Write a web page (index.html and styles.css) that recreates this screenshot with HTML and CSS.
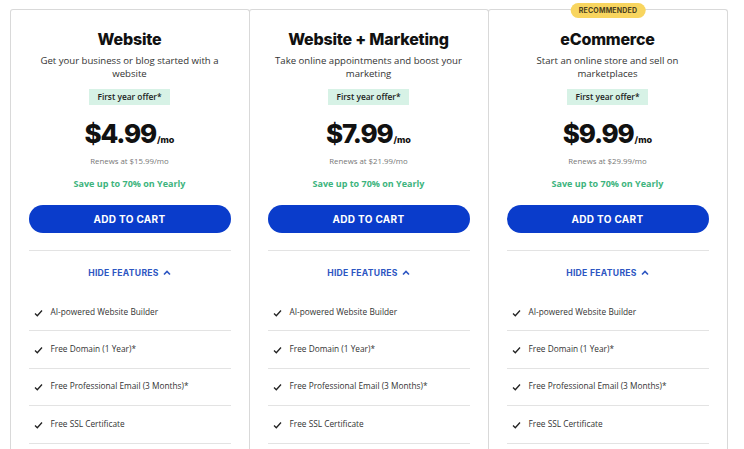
FILE: index.html
```html
<!DOCTYPE html>
<html>
	<head>
		<meta charset="UTF-8">
		<title>Plans</title>
		<link rel="stylesheet" href="styles.css">
	</head>
	<body>
		<div class="plans">
			<div class="card">
				<h2 class="title">Website</h2>
				<p class="desc">Get your business or blog started with a website</p>
				<span class="offer">First year offer*</span>
				<div class="price">$4.99<span class="per">/mo</span></div>
				<p class="renew">Renews at $15.99/mo</p>
				<p class="save">Save up to 70% on Yearly</p>
				<button class="cart">ADD TO CART</button>
				<div class="toggle">HIDE FEATURES <svg width="8" height="6" viewBox="0 0 8 6"><path d="M1 4.5 L4 1.5 L7 4.5" fill="none" stroke="currentColor" stroke-width="1.6"/></svg></div>
				<ul class="features">
					<li><svg class="check" width="9" height="8" viewBox="0 0 9 8"><path d="M1 4.5 L3.3 6.8 L8 1.5" fill="none" stroke="#222" stroke-width="1.3"/></svg>AI-powered Website Builder</li>
					<li><svg class="check" width="9" height="8" viewBox="0 0 9 8"><path d="M1 4.5 L3.3 6.8 L8 1.5" fill="none" stroke="#222" stroke-width="1.3"/></svg>Free Domain (1 Year)*</li>
					<li><svg class="check" width="9" height="8" viewBox="0 0 9 8"><path d="M1 4.5 L3.3 6.8 L8 1.5" fill="none" stroke="#222" stroke-width="1.3"/></svg>Free Professional Email (3 Months)*</li>
					<li><svg class="check" width="9" height="8" viewBox="0 0 9 8"><path d="M1 4.5 L3.3 6.8 L8 1.5" fill="none" stroke="#222" stroke-width="1.3"/></svg>Free SSL Certificate</li>
				</ul>
			</div>

			<div class="card">
				<h2 class="title">Website + Marketing</h2>
				<p class="desc">Take online appointments and boost your marketing</p>
				<span class="offer">First year offer*</span>
				<div class="price">$7.99<span class="per">/mo</span></div>
				<p class="renew">Renews at $21.99/mo</p>
				<p class="save">Save up to 70% on Yearly</p>
				<button class="cart">ADD TO CART</button>
				<div class="toggle">HIDE FEATURES <svg width="8" height="6" viewBox="0 0 8 6"><path d="M1 4.5 L4 1.5 L7 4.5" fill="none" stroke="currentColor" stroke-width="1.6"/></svg></div>
				<ul class="features">
					<li><svg class="check" width="9" height="8" viewBox="0 0 9 8"><path d="M1 4.5 L3.3 6.8 L8 1.5" fill="none" stroke="#222" stroke-width="1.3"/></svg>AI-powered Website Builder</li>
					<li><svg class="check" width="9" height="8" viewBox="0 0 9 8"><path d="M1 4.5 L3.3 6.8 L8 1.5" fill="none" stroke="#222" stroke-width="1.3"/></svg>Free Domain (1 Year)*</li>
					<li><svg class="check" width="9" height="8" viewBox="0 0 9 8"><path d="M1 4.5 L3.3 6.8 L8 1.5" fill="none" stroke="#222" stroke-width="1.3"/></svg>Free Professional Email (3 Months)*</li>
					<li><svg class="check" width="9" height="8" viewBox="0 0 9 8"><path d="M1 4.5 L3.3 6.8 L8 1.5" fill="none" stroke="#222" stroke-width="1.3"/></svg>Free SSL Certificate</li>
				</ul>
			</div>

			<div class="card">
				<span class="recommended">RECOMMENDED</span>
				<h2 class="title">eCommerce</h2>
				<p class="desc">Start an online store and sell on marketplaces</p>
				<span class="offer">First year offer*</span>
				<div class="price">$9.99<span class="per">/mo</span></div>
				<p class="renew">Renews at $29.99/mo</p>
				<p class="save">Save up to 70% on Yearly</p>
				<button class="cart">ADD TO CART</button>
				<div class="toggle">HIDE FEATURES <svg width="8" height="6" viewBox="0 0 8 6"><path d="M1 4.5 L4 1.5 L7 4.5" fill="none" stroke="currentColor" stroke-width="1.6"/></svg></div>
				<ul class="features">
					<li><svg class="check" width="9" height="8" viewBox="0 0 9 8"><path d="M1 4.5 L3.3 6.8 L8 1.5" fill="none" stroke="#222" stroke-width="1.3"/></svg>AI-powered Website Builder</li>
					<li><svg class="check" width="9" height="8" viewBox="0 0 9 8"><path d="M1 4.5 L3.3 6.8 L8 1.5" fill="none" stroke="#222" stroke-width="1.3"/></svg>Free Domain (1 Year)*</li>
					<li><svg class="check" width="9" height="8" viewBox="0 0 9 8"><path d="M1 4.5 L3.3 6.8 L8 1.5" fill="none" stroke="#222" stroke-width="1.3"/></svg>Free Professional Email (3 Months)*</li>
					<li><svg class="check" width="9" height="8" viewBox="0 0 9 8"><path d="M1 4.5 L3.3 6.8 L8 1.5" fill="none" stroke="#222" stroke-width="1.3"/></svg>Free SSL Certificate</li>
				</ul>
			</div>
		</div>
	</body>
</html>
```

FILE: styles.css
```css
* {
	margin: 0;
	padding: 0;
	box-sizing: border-box;
}

body {
	background: #fff;
	font-family: "Open Sans", "Liberation Sans", sans-serif;
	color: #333;
	overflow: hidden;
}

.plans {
	display: flex;
	padding: 9px 0 0 10px;
}

.card {
	position: relative;
	width: 240px;
	height: 460px;
	margin-right: -1px;
	border: 1px solid #d9d9d9;
	border-bottom: none;
	border-radius: 3px 3px 0 0;
	padding: 19px 19px 0 18px;
	display: flex;
	flex-direction: column;
	align-items: center;
	text-align: center;
}

.recommended {
	position: absolute;
	top: -7px;
	left: 50%;
	transform: translateX(-50%);
	background: #f8d55f;
	color: #4a4020;
	font-family: "Inter", sans-serif;
	font-size: 7px;
	font-weight: 700;
	letter-spacing: 0.2px;
	padding: 3px 8px;
	border-radius: 8px;
}

.title {
	font-family: "Inter", sans-serif;
	font-size: 16px;
	font-weight: 800;
	color: #111;
	line-height: 20px;
	letter-spacing: -0.2px;
}

.desc {
	font-size: 9.6px;
	line-height: 13px;
	margin-top: 5px;
	color: #333;
	padding: 0 4px;
}

.offer {
	display: inline-block;
	margin-top: 9px;
	background: #d7f2e6;
	color: #222;
	font-size: 8.4px;
	font-weight: 600;
	line-height: 16px;
	padding: 0 8px;
}

.price {
	margin-top: 14px;
	font-family: "Inter", sans-serif;
	font-size: 26px;
	font-weight: 800;
	color: #111;
	line-height: 30px;
	letter-spacing: -1.2px;
}

.per {
	font-size: 9px;
	font-weight: 800;
	letter-spacing: 0;
	margin-left: 1px;
}

.renew {
	margin-top: 0;
	font-size: 7.8px;
	color: #777;
	line-height: 12px;
}

.save {
	margin-top: 11px;
	font-size: 9px;
	font-weight: 700;
	color: #3db47d;
	line-height: 12px;
}

.cart {
	margin-top: 15px;
	width: 202px;
	height: 28px;
	border: none;
	border-radius: 14px;
	background: #0a3ccb;
	color: #fff;
	font-family: "Inter", sans-serif;
	font-size: 10px;
	font-weight: 700;
	letter-spacing: 0.3px;
}

.toggle {
	width: 202px;
	margin-top: 17px;
	border-top: 1px solid #e3e3e3;
	padding-top: 16px;
	font-family: "Inter", sans-serif;
	font-size: 8.6px;
	font-weight: 700;
	color: #2d56c2;
	letter-spacing: 0.3px;
	line-height: 12px;
	display: flex;
	justify-content: center;
	align-items: center;
	gap: 4px;
}

.features {
	list-style: none;
	width: 202px;
	margin-top: 15px;
}

.features li {
	display: flex;
	align-items: center;
	height: 37.4px;
	border-bottom: 1px solid #e3e3e3;
	font-size: 8.3px;
	color: #333;
	text-align: left;
	padding-bottom: 2px;
}

.check {
	margin: 3px 8px 0 5px;
	flex: none;
}
```
